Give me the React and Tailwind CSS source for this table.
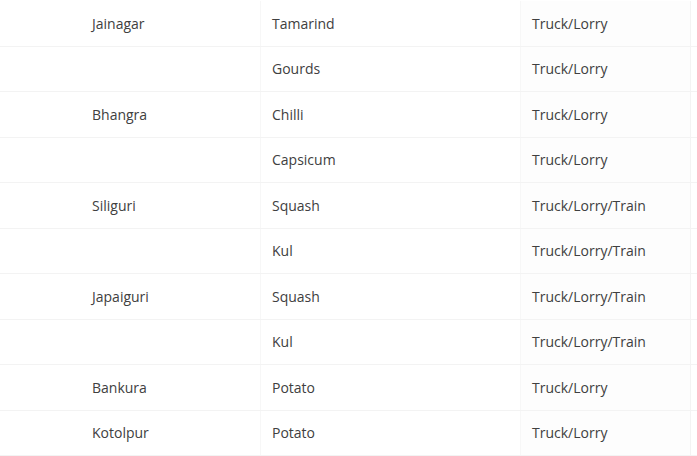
import React from 'react';

const rows = [
  ['Jainagar', 'Tamarind', 'Truck/Lorry'],
  ['', 'Gourds', 'Truck/Lorry'],
  ['Bhangra', 'Chilli', 'Truck/Lorry'],
  ['', 'Capsicum', 'Truck/Lorry'],
  ['Siliguri', 'Squash', 'Truck/Lorry/Train'],
  ['', 'Kul', 'Truck/Lorry/Train'],
  ['Japaiguri', 'Squash', 'Truck/Lorry/Train'],
  ['', 'Kul', 'Truck/Lorry/Train'],
  ['Bankura', 'Potato', 'Truck/Lorry'],
  ['Kotolpur', 'Potato', 'Truck/Lorry'],
];

export default function App() {
  return (
    <div className="w-[697px] h-[456px] overflow-hidden bg-white pt-px text-[14px] text-[#404040]" style={{ fontFamily: '"Open Sans", sans-serif' }}>
      <div className="flex flex-col">
        {rows.map((r, i) => (
          <div key={i} className="flex h-[45.5px] border-b border-[#f3f3f3]">
            <div className="w-[84px] shrink-0" />
            <div className="w-[176px] shrink-0 flex items-center pl-[8px]">{r[0]}</div>
            <div className="w-[260px] shrink-0 flex items-center pl-[11px] border-l border-[#f7f7f7]">{r[1]}</div>
            <div className="w-[170px] shrink-0 flex items-center pl-[11px] bg-[#fdfdfd] border-l border-[#f7f7f7]">{r[2]}</div>
            <div className="flex-1 border-l border-[#f3f3f3]" />
          </div>
        ))}
      </div>
    </div>
  );
}
